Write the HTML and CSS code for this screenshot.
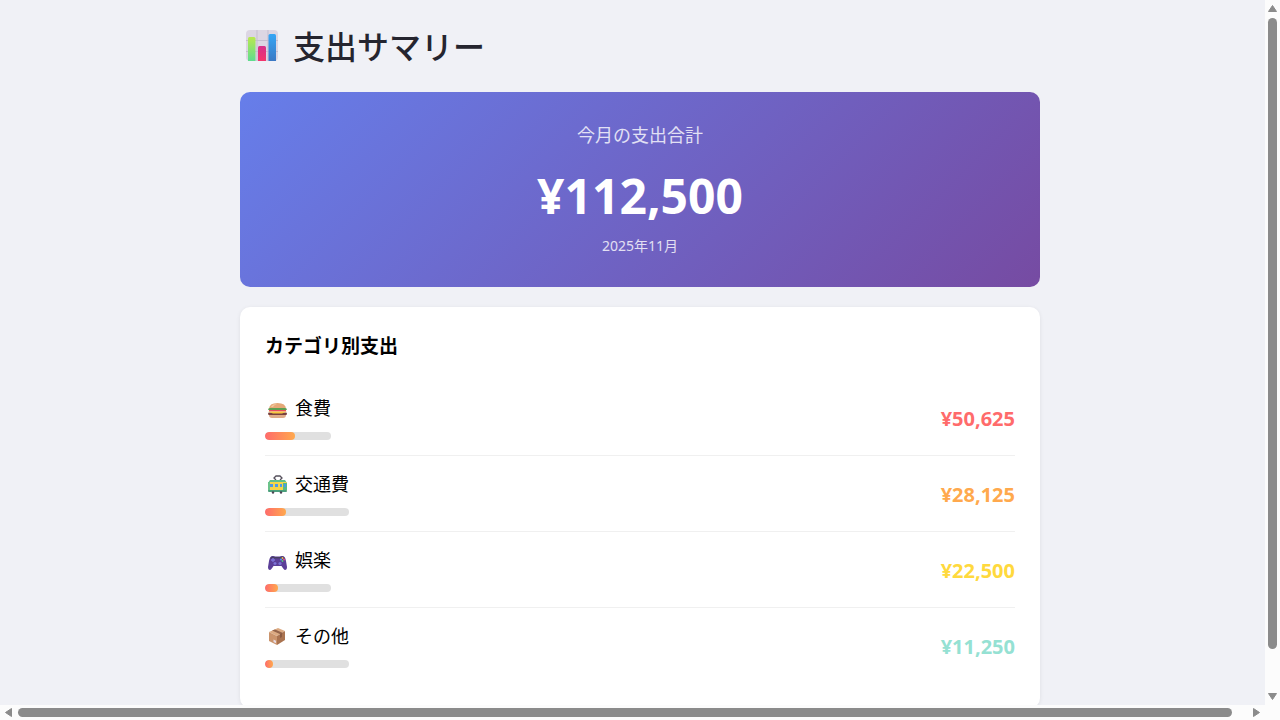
FILE: index.html
```html
<!DOCTYPE html>
<html lang="ja">

<head>
  <meta charset="UTF-8">
  <meta name="viewport" content="width=device-width, initial-scale=1.0">
  <title>支出サマリー</title>
  <link rel="stylesheet" href="styles.css">
</head>

<body>
  <main class="container">
    <h1 class="page-title">
      <svg class="title-icon" viewBox="0 0 34 32" aria-hidden="true">
        <defs>
          <linearGradient id="green" x1="0" y1="0" x2="0" y2="1">
            <stop offset="0" stop-color="#b9e84f" />
            <stop offset="1" stop-color="#5fdc8f" />
          </linearGradient>
          <linearGradient id="pink" x1="0" y1="0" x2="0" y2="1">
            <stop offset="0" stop-color="#d5308c" />
            <stop offset="1" stop-color="#f5356b" />
          </linearGradient>
          <linearGradient id="blue" x1="0" y1="0" x2="0" y2="1">
            <stop offset="0" stop-color="#36a6f5" />
            <stop offset="1" stop-color="#3b78c4" />
          </linearGradient>
        </defs>
        <rect x="1" y="1" width="32" height="31" rx="4" fill="#dcd6e3" />
        <path d="M1 11.500h32M1 22.500h32M12 1v31M23 1v31" stroke="#c5bdcf" stroke-width="1" fill="none" />
        <path d="M3 32V9.500Q3 8 4.500 8h4.500Q10.500 8 10.500 9.500V32z" fill="url(#green)" />
        <path d="M13 32V18.500Q13 17 14.500 17h5q1.500 0 1.500 1.500V32z" fill="url(#pink)" />
        <path d="M23.500 32V6.500Q23.500 5 25 5h4.500Q31 5 31 6.500V32z" fill="url(#blue)" />
      </svg>
      <span>支出サマリー</span>
    </h1>

    <section class="total">
      <p class="total-label">今月の支出合計</p>
      <p class="total-amount">¥112,500</p>
      <p class="total-date">2025年11月</p>
    </section>

    <section class="card">
      <h2 class="card-title">カテゴリ別支出</h2>
      <ul class="category-list">
        <li class="category">
          <div class="category-info">
            <div class="category-name">
              <svg class="category-icon" viewBox="0 0 24 24" aria-hidden="true">
                <path d="M4 12Q4 6 12.500 6T21 12z" fill="#e5a878" />
                <path d="M6 10Q7 7 12 7Q9 8 8 10z" fill="#f2c69c" />
                <path d="M3 12.500Q3 11 5 11h15q2 0 2 1.500l-2 1.500H5z" fill="#5ba052" />
                <rect x="4" y="13" width="17" height="1.500" fill="#e84b62" />
                <rect x="3" y="15.500" width="19" height="2.500" rx="1.200" fill="#79403e" />
                <path d="M3 14.500h19l-5 2H8z" fill="#f7c83e" />
                <path d="M4 18h17q0 3-3 3H7q-3 0-3-3z" fill="#deab88" />
              </svg>
              <span>食費</span>
            </div>
            <div class="bar"><div class="bar-fill" style="width: 45%"></div></div>
          </div>
          <span class="amount amount-food">¥50,625</span>
        </li>
        <li class="category">
          <div class="category-info">
            <div class="category-name">
              <svg class="category-icon" viewBox="0 0 24 24" aria-hidden="true">
                <path d="M11 7l-2-2 2-2h4l2 2-2 2" stroke="#55505c" stroke-width="1.300" fill="none" />
                <path d="M5 7h15l2 3H3z" fill="#5fc08c" />
                <rect x="3" y="9" width="19" height="9" rx="1" fill="#f5d548" />
                <rect x="3" y="9" width="2" height="9" fill="#6cc38a" />
                <rect x="5" y="11" width="3" height="3" fill="#4c9be8" />
                <rect x="10" y="11" width="3" height="3" fill="#4c9be8" />
                <rect x="15" y="11" width="2" height="3" fill="#4c9be8" />
                <rect x="18" y="10" width="4" height="7" fill="#58b98a" />
                <rect x="19" y="11" width="2" height="3" fill="#4c9be8" />
                <rect x="3" y="17" width="19" height="2" rx="1" fill="#4a9f7c" />
                <circle cx="8" cy="19.500" r="1.200" fill="#4d4655" />
                <circle cx="16" cy="19.500" r="1.200" fill="#4d4655" />
              </svg>
              <span>交通費</span>
            </div>
            <div class="bar"><div class="bar-fill" style="width: 25%"></div></div>
          </div>
          <span class="amount amount-transport">¥28,125</span>
        </li>
        <li class="category">
          <div class="category-info">
            <div class="category-name">
              <svg class="category-icon" viewBox="0 0 24 24" aria-hidden="true">
                <path d="M8 7Q12.500 8 17 7q3-.5 4 5l1 6q0 3-2 3-1 0-3.500-4h-8Q6 21 5 21q-2 0-2-3l1-6Q5 6.500 8 7z" fill="#5b3f98" />
                <path d="M8 7.500Q12.500 8.500 17 7.500q2 0 3 2H5q1-2 3-2z" fill="#494064" />
                <path d="M8 9v4M6 11h4M10 13v3M8.500 14.500h3" stroke="#7d74d8" stroke-width="1.300" />
                <circle cx="15" cy="14.500" r="1.600" fill="#7972d4" />
                <circle cx="17.500" cy="9" r=".9" fill="#f1bb46" />
                <circle cx="17.500" cy="12" r=".9" fill="#55c784" />
                <circle cx="16" cy="10.500" r=".9" fill="#4fa8ed" />
                <circle cx="19" cy="10.500" r=".9" fill="#ef5275" />
              </svg>
              <span>娯楽</span>
            </div>
            <div class="bar"><div class="bar-fill" style="width: 20%"></div></div>
          </div>
          <span class="amount amount-fun">¥22,500</span>
        </li>
        <li class="category">
          <div class="category-info">
            <div class="category-name">
              <svg class="category-icon" viewBox="0 0 24 24" aria-hidden="true">
                <path d="M4 7l9-4 7 3-8 5z" fill="#dcaa82" />
                <path d="M4 7l8 4v9l-8-4z" fill="#cb946c" />
                <path d="M12 11l8-5v9l-8 5z" fill="#aa7350" />
                <path d="M7 5.500l9 4 2-1.500-8-3.500z" fill="#94644a" />
                <path d="M15 9l2-1v4l-2 1z" fill="#8a5a42" />
                <path d="M8.500 14.500l2.500 1.300v2.500L8.500 17z" fill="#e8dbe3" />
              </svg>
              <span>その他</span>
            </div>
            <div class="bar"><div class="bar-fill" style="width: 10%"></div></div>
          </div>
          <span class="amount amount-other">¥11,250</span>
        </li>
      </ul>
    </section>
  </main>

  <div class="scrollbar scrollbar-y" aria-hidden="true">
    <svg class="arrow" viewBox="0 0 15 18"><path d="M7.500 5.500l4 6h-8z" /></svg>
    <div class="track"><div class="thumb"></div></div>
    <svg class="arrow" viewBox="0 0 15 18"><path d="M7.500 12.500l4-6h-8z" /></svg>
  </div>
  <div class="scrollbar scrollbar-x" aria-hidden="true">
    <svg class="arrow" viewBox="0 0 18 15"><path d="M5.500 7.500l6-4v8z" /></svg>
    <div class="track"><div class="thumb"></div></div>
    <svg class="arrow" viewBox="0 0 18 15"><path d="M12.500 7.500l-6-4v8z" /></svg>
  </div>
</body>

</html>
```
FILE: styles.css
```css
* {
  box-sizing: border-box;
  margin: 0;
  padding: 0;
}

html {
  scrollbar-width: none;
}

body {
  padding: 20px;
  font-family: "Noto Sans", "Noto Sans CJK JP", sans-serif;
  background: #f0f1f6;
  color: #000;
}

.container {
  max-width: 800px;
  margin: 0 auto;
}

.page-title {
  display: flex;
  align-items: center;
  gap: 14px;
  margin-bottom: 22px;
  padding-left: 5px;
  font-family: "Noto Sans CJK JP", sans-serif;
  font-size: 32px;
  font-weight: 500;
  line-height: 50px;
  color: #25252f;
}

.title-icon {
  width: 34px;
  height: 32px;
}

.total {
  margin-bottom: 20px;
  padding: 30px;
  border-radius: 10px;
  background: linear-gradient(135deg, #667eea, #764ba2);
  color: white;
  text-align: center;
}

.total-label {
  font-size: 18px;
  line-height: 27px;
  opacity: 0.8;
}

.total-amount {
  margin: 10px 0 2px;
  font-size: 48px;
  font-weight: bold;
  line-height: 74px;
}

.total-date {
  font-size: 14px;
  line-height: 22px;
  opacity: 0.8;
}

.card {
  padding: 25px;
  border-radius: 10px;
  background: white;
  box-shadow: 0 1px 4px rgba(0, 0, 0, 0.08);
}

.card-title {
  margin-bottom: 20px;
  font-size: 19px;
  line-height: 28px;
}

.category-list {
  list-style: none;
}

.category {
  display: flex;
  justify-content: space-between;
  align-items: center;
  padding: 15px 0;
  border-bottom: 1px solid #f0f0f0;
}

.category:last-child {
  border-bottom: 0;
}

.category-name {
  display: flex;
  align-items: center;
  gap: 6px;
  font-size: 18px;
  line-height: 27px;
}

.category-icon {
  width: 24px;
  height: 24px;
}

.bar {
  height: 8px;
  margin-top: 10px;
  border-radius: 4px;
  background: #e0e0e0;
  overflow: hidden;
}

.bar-fill {
  height: 100%;
  border-radius: 4px;
  background: linear-gradient(90deg, #ff6b6b, #ffa94d);
}

.amount {
  padding-top: 2px;
  font-size: 20px;
  font-weight: bold;
  line-height: 28px;
}

.amount-food {
  color: #ff6b6b;
}

.amount-transport {
  color: #ffa94d;
}

.amount-fun {
  color: #ffd93d;
}

.amount-other {
  color: #95e1d3;
}

/* scrollbars lie over the page */
.scrollbar {
  position: fixed;
  right: 0;
  bottom: 0;
  display: flex;
  background: #fcfcfc;
}

.scrollbar-y {
  top: 0;
  width: 15px;
  flex-direction: column;
  padding-bottom: 15px;
}

.scrollbar-x {
  left: 0;
  height: 15px;
  padding-right: 15px;
}

.arrow {
  flex: none;
  fill: #8b8b8b;
  stroke: #8b8b8b;
  stroke-width: 1px;
  stroke-linejoin: round;
}

.scrollbar-y .arrow {
  width: 15px;
  height: 18px;
}

.scrollbar-x .arrow {
  width: 18px;
  height: 15px;
}

.track {
  flex: 1;
}

.scrollbar-y .track {
  padding: 0 3px 38px;
}

.scrollbar-x .track {
  padding: 3px 15px 3px 0;
}

.thumb {
  height: 100%;
  border-radius: 5px;
  background: #8b8b8b;
}
```
